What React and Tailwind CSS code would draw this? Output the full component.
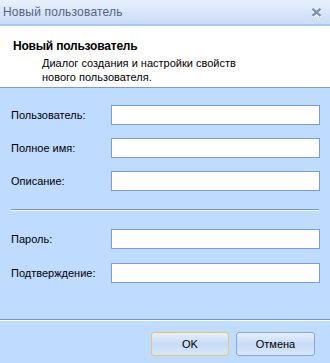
export default function App() {
  const font = { fontFamily: '"Liberation Sans", Tahoma, Arial, sans-serif' };
  const Row = ({ label }) => (
    <div className="flex items-center h-[20px]">
      <div className="w-[100px] text-[11px] text-black leading-none">{label}</div>
      <div className="w-[209px] h-[20px] bg-white border border-[#7a9bd3]" />
    </div>
  );
  return (
    <div className="w-[330px] h-[363px] bg-[#bfdbff] flex flex-col overflow-hidden" style={font}>
      <div className="h-[26px] flex items-center justify-between pl-[3px] pr-[8px] bg-gradient-to-b from-[#e8f0fc] to-[#cadcf7] border-b-2 border-[#a8c6f0] shrink-0">
        <span className="text-[12px] text-[#56647a] tracking-[0.2px]">Новый пользователь</span>
        <svg width="11" height="9" viewBox="0 0 11 9" className="mt-[1px]">
          <path d="M1.5 1.5 L9.5 8.5 M9.5 1.5 L1.5 8.5" stroke="#ffffff" strokeWidth="2.4" transform="translate(0 0.8)" />
          <path d="M1.5 0.8 L9.5 7.8 M9.5 0.8 L1.5 7.8" stroke="#7c8ea8" strokeWidth="2.2" />
        </svg>
      </div>
      <div className="h-[62px] bg-white border-b border-[#7f9cc8] shrink-0 pt-[13px] pl-[13px]">
        <div className="text-[12px] font-bold text-black leading-[15px] tracking-[-0.2px]">Новый пользователь</div>
        <div className="text-[11px] text-black leading-[14px] pl-[29px] mt-[2px]">
          Диалог создания и настройки свойств
          <br />
          нового пользователя.
        </div>
      </div>
      <div className="pl-[11px] pt-[17px] flex flex-col gap-[13px]">
        <Row label="Пользователь:" />
        <Row label="Полное имя:" />
        <Row label="Описание:" />
      </div>
      <div className="ml-[11px] mt-[18px] w-[308px] border-t border-[#6e97d8] border-b border-b-white" />
      <div className="pl-[11px] pt-[18px] flex flex-col gap-[14px]">
        <Row label="Пароль:" />
        <Row label="Подтверждение:" />
      </div>
      <div className="mt-[36px] w-full border-t border-[#6e97d8] border-b border-b-white" />
      <div className="flex justify-end gap-[7px] pr-[15px] pt-[11px]">
        <button className="w-[78px] h-[24px] rounded-[3px] border border-[#e8c66a] bg-gradient-to-b from-[#e6effb] via-[#c7dbf6] to-[#d7e6fa] text-[11px] text-black leading-none" style={font}>
          OK
        </button>
        <button className="w-[79px] h-[24px] rounded-[3px] border border-[#8aa6cf] bg-gradient-to-b from-[#e6effb] via-[#c7dbf6] to-[#d7e6fa] text-[11px] text-black leading-none" style={font}>
          Отмена
        </button>
      </div>
    </div>
  );
}
